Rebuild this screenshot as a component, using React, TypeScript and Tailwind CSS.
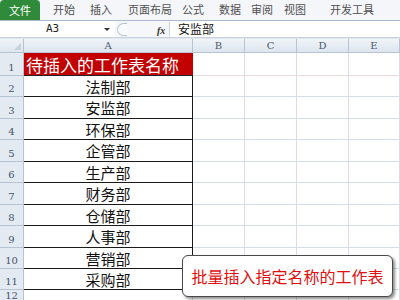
import React from 'react';

const tabs = ['开始', '插入', '页面布局', '公式', '数据', '审阅', '视图', '开发工具'];
const tabX = [53, 90, 128, 182, 219, 251, 284, 330];
const names = ['法制部', '安监部', '环保部', '企管部', '生产部', '财务部', '仓储部', '人事部', '营销部', '采购部'];
const heights = [21, 22, 21, 22, 21, 22, 21, 22, 21, 21];
const cols = [
  { label: 'B', w: 52 },
  { label: 'C', w: 52 },
  { label: 'D', w: 52 },
  { label: 'E', w: 51 },
];

const font = { fontFamily: '"SimSun", "Noto Sans CJK SC", sans-serif' };
const serif = { fontFamily: '"DejaVu Serif", serif' };

export default function App() {
  return (
    <div className="w-[400px] h-[300px] overflow-hidden bg-white relative flex flex-col" style={font}>
      {/* Ribbon tabs */}
      <div className="h-[21px] shrink-0 flex bg-[#f4f6f9] border-b border-[#a9bad0] relative">
        <div className="w-[40px] h-[20px] bg-[#2f8a3a] text-white text-[11px] flex items-center justify-center rounded-t-sm">
          文件
        </div>
        {tabs.map((t, i) => (
          <span
            key={t}
            className="absolute top-[4px] text-[11px] text-[#505050] leading-none"
            style={{ left: tabX[i] }}
          >
            {t}
          </span>
        ))}
      </div>

      {/* Formula bar */}
      <div className="h-[17px] shrink-0 flex items-stretch bg-[#f5f7fa] border-b border-[#c9d3df]">
        <div className="w-[115px] bg-white flex items-center relative">
          <span className="flex-1 text-center text-[11px] text-[#222] pr-[10px]" style={{ fontFamily: '"DejaVu Sans Mono", monospace' }}>A3</span>
          <span className="absolute right-[5px] top-[7px] w-0 h-0 border-l-[3px] border-r-[3px] border-t-[3px] border-l-transparent border-r-transparent border-t-[#333]" />
        </div>
        <div className="w-[55px] flex items-center relative">
          <div className="ml-[2px] w-[10px] h-[13px] rounded-l-full border border-r-0 border-[#b7c2cf] bg-[#f9fafb]" />
          <span className="absolute left-[42px] top-[2px] text-[10px] italic font-bold text-[#333]" style={{ fontFamily: '"Liberation Serif", serif' }}>fx</span>
          <div className="absolute right-0 top-[1px] bottom-[1px] w-px bg-[#c9d3df]" />
        </div>
        <div className="flex-1 bg-white flex items-center pl-[8px] text-[12px] text-[#111]">安监部</div>
      </div>

      {/* Sheet */}
      <div className="flex-1 flex flex-col bg-[#dfe6ee] pt-px">
        {/* column headers */}
        <div className="h-[14px] shrink-0 flex bg-gradient-to-b from-[#f0f4f8] to-[#dde5ee] border-b border-[#b6c3d2] text-[10px] text-[#4a5a6e]">
          <div className="w-[24px] border-r border-[#b6c3d2] relative">
            <svg className="absolute right-[2px] bottom-[2px]" width="7" height="7"><polygon points="7,0 7,7 0,7" fill="#c8d1db" /></svg>
          </div>
          <div className="w-[169px] border-r border-[#b6c3d2] flex items-center justify-center" style={serif}>A</div>
          {cols.map((c) => (
            <div key={c.label} className="border-r border-[#b6c3d2] flex items-center justify-center" style={{ width: c.w, ...serif }}>
              {c.label}
            </div>
          ))}
        </div>

        {/* row 1 */}
        <div className="h-[23px] shrink-0 flex bg-white">
          <div className="w-[24px] bg-[#e3eaf2] border-r border-b border-[#b6c3d2] flex items-end justify-center text-[10px] text-[#44546a]" style={serif}>1</div>
          <div className="w-[169px] bg-[#c20000] text-white text-[17px] flex items-center pl-[2px] leading-none border-b border-[#222]">
            待插入的工作表名称
          </div>
          {cols.map((c) => (
            <div key={c.label} className="border-r border-b border-[#d6dde6] border-b-[#ecd9de]" style={{ width: c.w }} />
          ))}
        </div>

        {names.map((n, i) => (
          <div key={n} className="shrink-0 flex bg-white" style={{ height: heights[i] }}>
            <div className="w-[24px] bg-[#e3eaf2] border-r border-b border-[#b6c3d2] flex items-end justify-center text-[10px] text-[#44546a]" style={serif}>
              {i + 2}
            </div>
            <div className="w-[169px] border-r border-b border-[#1a1a1a] flex items-center justify-center text-[15px] text-[#111] leading-none">
              {n}
            </div>
            {cols.map((c) => (
              <div key={c.label} className="border-r border-b border-[#d6dde6]" style={{ width: c.w }} />
            ))}
          </div>
        ))}

        <div className="flex-1 flex bg-white">
          <div className="w-[24px] bg-[#e3eaf2] border-r border-[#b6c3d2] flex justify-center text-[10px] leading-[11px] text-[#44546a]" style={serif}>12</div>
          <div className="w-[169px] border-r border-[#d6dde6]" />
          {cols.map((c) => (
            <div key={c.label} className="border-r border-[#d6dde6]" style={{ width: c.w }} />
          ))}
        </div>
      </div>

      {/* Caption */}
      <div className="absolute left-[182px] top-[255px] w-[211px] h-[42px] bg-white border border-[#4a4a4a] rounded-[6px] shadow-[2px_2px_3px_rgba(0,0,0,0.45)] flex items-center justify-center text-[16px] text-[#e01010]">
        批量插入指定名称的工作表
      </div>
    </div>
  );
}
